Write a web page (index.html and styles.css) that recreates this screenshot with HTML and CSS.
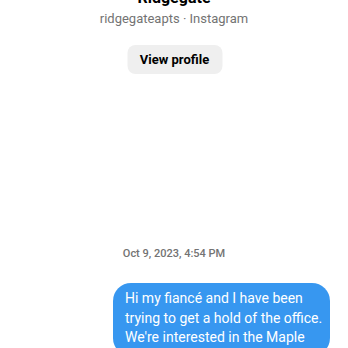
FILE: index.html
```html
<!DOCTYPE html>
<html>
<head>
<meta charset="utf-8">
<link rel="stylesheet" href="styles.css">
</head>
<body>
<div class="page">
  <div class="profile">
    <div class="name">Ridgegate</div>
    <div class="sub">ridgegateapts · Instagram</div>
    <div class="btn">View profile</div>
  </div>
  <div class="time">Oct 9, 2023, 4:54 PM</div>
  <div class="row">
    <div class="bubble">Hi my fiancé and I have been trying to get a hold of the office. We're interested in the Maple</div>
  </div>
</div>
</body>
</html>
```
FILE: styles.css
```css
html, body {
  margin: 0;
  padding: 0;
  background: #ffffff;
}
body {
  font-family: Roboto, "Noto Sans", sans-serif;
  width: 348px;
  height: 348px;
  overflow: hidden;
}
.page {
  display: flex;
  flex-direction: column;
}
.profile {
  display: flex;
  flex-direction: column;
  align-items: center;
  margin-top: -12px;
}
.name {
  font-size: 16px;
  font-weight: 700;
  line-height: 20px;
  color: #000;
}
.sub {
  font-size: 13px;
  line-height: 18px;
  color: #737373;
  margin-top: 2px;
}
.btn {
  margin-top: 17px;
  width: 95px;
  height: 29px;
  box-sizing: border-box;
  background: #efefef;
  border-radius: 8px;
  display: flex;
  align-items: center;
  justify-content: center;
  font-size: 13px;
  font-weight: 700;
  color: #000;
  transform: translateX(0.5px);
}
.time {
  margin-top: 173px;
  text-align: center;
  font-size: 11px;
  font-weight: 500;
  color: #737373;
  line-height: 14px;
}
.row {
  display: flex;
  justify-content: flex-end;
  padding-right: 18px;
  margin-top: 22px;
}
.bubble {
  width: 217px;
  box-sizing: border-box;
  background: #3797f0;
  color: #fff;
  border-radius: 18px;
  padding: 6px 4px 8px 12px;
  font-size: 14px;
  line-height: 19.5px;
}
```
